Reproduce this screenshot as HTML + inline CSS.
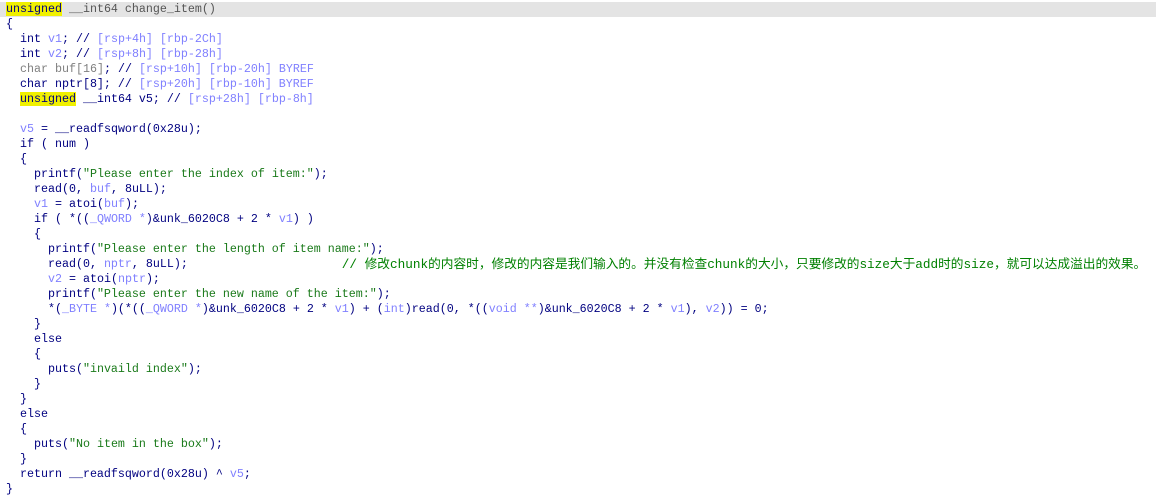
<!DOCTYPE html>
<html><head><meta charset="utf-8"><style>
body{margin:0;background:#fff;width:1156px;height:497px;overflow:hidden}
pre{margin:0;padding:2px 0 0 6px;font-family:"Liberation Mono","Noto Sans CJK SC",monospace;font-size:11.67px;line-height:15px;color:#000080}
.h{background:#e4e4e4;margin-left:-6px;padding-left:6px;color:#555;display:block}
.y{background:#f0f000;color:#000080}
.v{color:#8080ff}
.g{color:#808080}
.s{color:#1a7a1a}
.c{color:#008000;font-size:12.7px;line-height:15px;vertical-align:top}
</style></head><body><pre><span class="h"><span class="y">unsigned</span> __int64 change_item()</span>{
  int <span class="v">v1</span>; // <span class="v">[rsp+4h] [rbp-2Ch]</span>
  int <span class="v">v2</span>; // <span class="v">[rsp+8h] [rbp-28h]</span>
  <span class="g">char buf[16]</span>; // <span class="v">[rsp+10h] [rbp-20h] BYREF</span>
  char nptr[8]; // <span class="v">[rsp+20h] [rbp-10h] BYREF</span>
  <span class="y">unsigned</span> __int64 v5; // <span class="v">[rsp+28h] [rbp-8h]</span>

  <span class="v">v5</span> = __readfsqword(0x28u);
  if ( num )
  {
    printf(<span class="s">"Please enter the index of item:"</span>);
    read(0, <span class="v">buf</span>, 8uLL);
    <span class="v">v1</span> = atoi(<span class="v">buf</span>);
    if ( *((<span class="v">_QWORD *</span>)&amp;unk_6020C8 + 2 * <span class="v">v1</span>) )
    {
      printf(<span class="s">"Please enter the length of item name:"</span>);
      read(0, <span class="v">nptr</span>, 8uLL);                      <span class="c">// 修改chunk的内容时，修改的内容是我们输入的。并没有检查chunk的大小，只要修改的size大于add时的size，就可以达成溢出的效果。</span>
      <span class="v">v2</span> = atoi(<span class="v">nptr</span>);
      printf(<span class="s">"Please enter the new name of the item:"</span>);
      *(<span class="v">_BYTE *</span>)(*((<span class="v">_QWORD *</span>)&amp;unk_6020C8 + 2 * <span class="v">v1</span>) + (<span class="v">int</span>)read(0, *((<span class="v">void **</span>)&amp;unk_6020C8 + 2 * <span class="v">v1</span>), <span class="v">v2</span>)) = 0;
    }
    else
    {
      puts(<span class="s">"invaild index"</span>);
    }
  }
  else
  {
    puts(<span class="s">"No item in the box"</span>);
  }
  return __readfsqword(0x28u) ^ <span class="v">v5</span>;
}</pre></body></html>
